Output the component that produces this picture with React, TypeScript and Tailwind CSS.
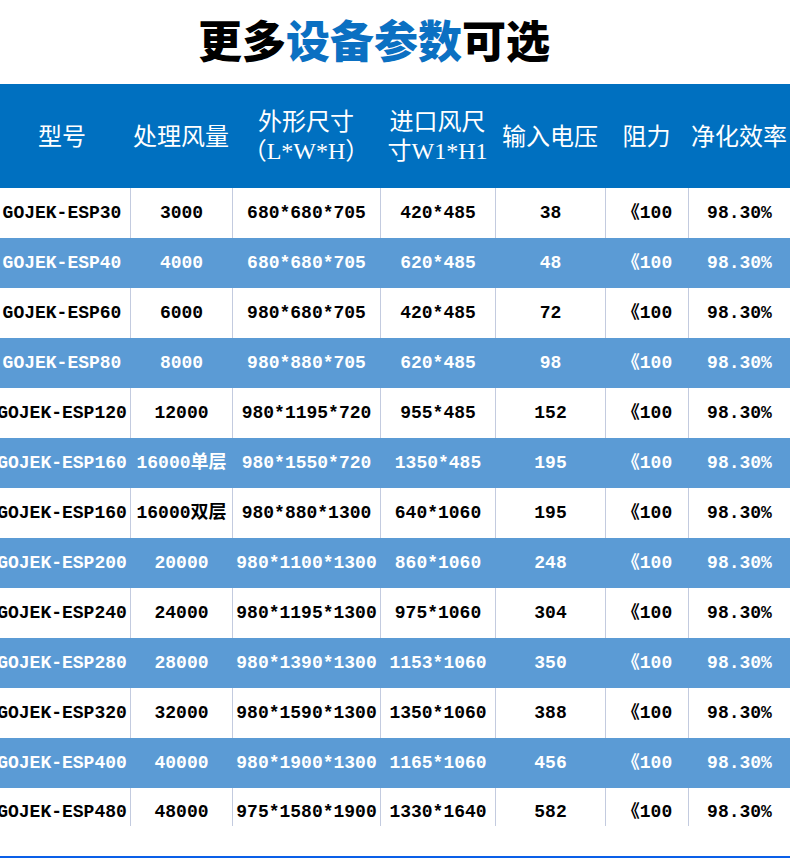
import React from 'react';

const cols = ['w-[136px]', 'w-[102px]', 'w-[148px]', 'w-[115px]', 'w-[110px]', 'w-[83px]', 'w-[102px]'];

const rows: string[][] = [
    ['GOJEK-ESP30', '3000', '680*680*705', '420*485', '38'],
    ['GOJEK-ESP40', '4000', '680*680*705', '620*485', '48'],
    ['GOJEK-ESP60', '6000', '980*680*705', '420*485', '72'],
    ['GOJEK-ESP80', '8000', '980*880*705', '620*485', '98'],
    ['GOJEK-ESP120', '12000', '980*1195*720', '955*485', '152'],
    ['GOJEK-ESP160', '16000单层', '980*1550*720', '1350*485', '195'],
    ['GOJEK-ESP160', '16000双层', '980*880*1300', '640*1060', '195'],
    ['GOJEK-ESP200', '20000', '980*1100*1300', '860*1060', '248'],
    ['GOJEK-ESP240', '24000', '980*1195*1300', '975*1060', '304'],
    ['GOJEK-ESP280', '28000', '980*1390*1300', '1153*1060', '350'],
    ['GOJEK-ESP320', '32000', '980*1590*1300', '1350*1060', '388'],
    ['GOJEK-ESP400', '40000', '980*1900*1300', '1165*1060', '456'],
    ['GOJEK-ESP480', '48000', '975*1580*1900', '1330*1640', '582'],
];

const headers: React.ReactNode[] = [
    '型号',
    '处理风量',
    <>外形尺寸<br />（L*W*H）</>,
    <>进口风尺<br />寸W1*H1</>,
    '输入电压',
    '阻力',
    '净化效率',
];

const App: React.FC = () => {
    return (
        <div className="w-[790px] h-[858px] bg-white overflow-hidden">
            {/* title */}
            <div className="h-[84px] flex justify-center pr-[42px] pt-[17px]">
                <h1 className="text-[44px] leading-[44px] font-black text-black whitespace-nowrap" style={{ fontFamily: '"Noto Sans CJK SC", sans-serif' }}>
                    更多<span className="text-[#0b70c2]">设备参数</span>可选
                </h1>
            </div>

            <div className="w-[790px] overflow-hidden">
                <div className="-ml-[6px] w-[796px]">
                    {/* header */}
                    <div className="h-[104px] flex bg-[#0070c0] text-white text-[24px] leading-[29px]" style={{ fontFamily: '"Liberation Serif", "Noto Sans CJK SC", serif' }}>
                        {headers.map((h, i) => (
                            <div key={i} className={`${cols[i]} shrink-0 flex items-center justify-center text-center whitespace-nowrap pt-[2px]`}>
                                <div>{h}</div>
                            </div>
                        ))}
                    </div>

                    {/* body */}
                    {rows.map((r, ri) => {
                        const blue = ri % 2 === 1;
                        const last = ri === rows.length - 1;
                        const cells = [...r, '《100', '98.30%'];
                        return (
                            <div
                                key={ri}
                                className={`flex ${last ? 'h-[38px] leading-[48px]' : 'h-[50px] leading-[50px]'} ${blue ? 'bg-[#5b9bd5] text-white' : 'bg-white text-black'} text-[18px] font-bold`}
                                style={{ fontFamily: '"Liberation Mono", "Noto Sans CJK SC", monospace' }}
                            >
                                {cells.map((c, ci) => (
                                    <div
                                        key={ci}
                                        className={`${cols[ci]} shrink-0 text-center whitespace-nowrap ${ci > 0 ? (blue ? 'border-l border-[#5b9bd5]' : 'border-l border-[#c3cbdf]') : ''}`}
                                    >
                                        {c}
                                    </div>
                                ))}
                            </div>
                        );
                    })}
                </div>
            </div>

            <div className="h-[30px]" />
            <div className="h-[2px] bg-[#0a5fe8]" />
        </div>
    );
};

export default App;
